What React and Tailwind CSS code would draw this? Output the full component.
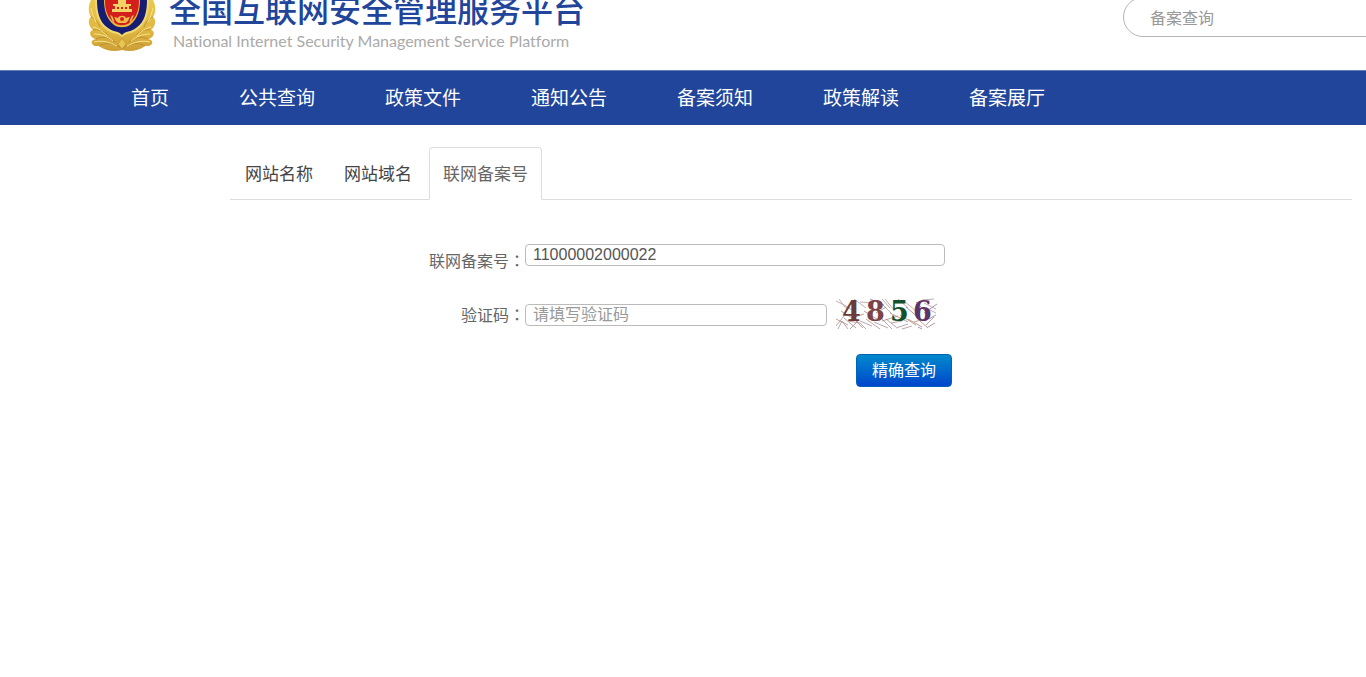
import { useState } from "react";

const menus = ['首页', '公共查询', '政策文件', '通知公告', '备案须知', '政策解读', '备案展厅'];

const tabs = [
    { id: 'name', label: '网站名称' },
    { id: 'domain', label: '网站域名' },
    { id: 'record', label: '联网备案号' },
];

const code = [
    { char: '4', x: 6, color: '#6b3a3a' },
    { char: '8', x: 30, color: '#7a4448' },
    { char: '5', x: 54, color: '#14502c' },
    { char: '6', x: 77, color: '#5c3468' },
];

function Emblem() {
    return (
        <svg className="shrink-0" width="68" height="52" viewBox="0 0 68 52" aria-hidden="true">
            <defs>
                <linearGradient id="gold" x1="0" y1="0" x2="0" y2="1">
                    <stop offset="0" stopColor="#ecc94e" />
                    <stop offset="0.6" stopColor="#e0b640" />
                    <stop offset="1" stopColor="#cc9f36" />
                </linearGradient>
            </defs>
            {/* wreath */}
            <path d="M3 0 C0 6 0 12 3 17 C-1 20 1 27 5 30 C0 31 2 38 8 39 C1 40 3 47 11 46 C17 51 27 52 34 50 C41 52 51 51 57 46 C65 47 67 40 60 39 C66 38 68 31 63 30 C67 27 69 20 65 17 C68 12 68 6 65 0 Z" fill="url(#gold)" />
            <g fill="none" stroke="#b58a30" strokeWidth="0.8">
                <path d="M3 17 C7 18 10 22 12 27 M5 30 C11 29 16 31 20 35 M8 39 C14 36 21 37 27 42 M11 46 C18 42 26 43 33 48" />
                <path d="M65 17 C61 18 58 22 56 27 M63 30 C57 29 52 31 48 35 M60 39 C54 36 47 37 41 42 M57 46 C50 42 42 43 35 48" />
            </g>
            <g fill="none" stroke="#f7e58c" strokeWidth="1">
                <path d="M3 8 C4 13 6 18 8 22 M5 27 C10 28 15 31 19 36 M6 34 C13 34 19 36 25 41 M6 42 C14 40 22 42 29 46" />
                <path d="M65 8 C64 13 62 18 60 22 M63 27 C58 28 53 31 49 36 M62 34 C55 34 49 36 43 41 M62 42 C54 40 46 42 39 46" />
            </g>
            {/* shield */}
            <path d="M7 0 C7 12 9 23 19 30 C24 34 30 33 34 37 C38 33 44 34 49 30 C59 23 61 12 61 0 Z" fill="#f0d872" />
            <path d="M9 0 C9 11 11 22 20 28 C25 32 31 31 34 35 C37 31 43 32 48 28 C57 22 59 11 59 0 Z" fill="#171d72" />
            {/* red disc with the gate and the gear */}
            <path d="M16 0 C16 9 18 19 26 25 C30 28 38 28 42 25 C50 19 52 9 52 0 Z" fill="#e8b63e" />
            <path d="M17 0 C17 9 19 18 27 23 C31 26 37 26 41 23 C49 18 51 9 51 0 Z" fill="#d51f1c" />
            <path d="M24 12 H44 V9 H41 V6 H43 V4 H38 V0 H30 V4 H25 V6 H27 V9 H24 Z" fill="#f3d266" />
            <path d="M29 7 H31 V9 H29 Z M33 7 H35 V9 H33 Z M37 7 H39 V9 H37 Z" fill="#d51f1c" />
            <path d="M22 15 C26 17 28 17 30 18 C31 15 37 15 38 18 C40 17 42 17 46 15 L43 22 C41 21 39 21 38 23 H30 C29 21 27 21 25 22 Z" fill="#efb94a" />
            <path d="M25 16 L28 23 M43 16 L40 23" stroke="#c81a18" strokeWidth="1.4" />
            <circle cx="34" cy="19" r="2" fill="#d51f1c" />
            {/* knot under the shield */}
            <path d="M34 38 L30 44 L34 49 L38 44 Z" fill="#e9c650" stroke="#b58a30" strokeWidth="0.6" />
        </svg>
    )
}

function Captcha() {
    return (
        <svg className="overflow-visible" width="101" height="31" viewBox="0 0 101 31" role="img" aria-label="验证码图片">
            <g fill="none" strokeWidth="0.8">
                <path stroke="#b59a9a" d="M0 2 L14 9 M3 0 L9 8 L20 12 M18 0 L30 9 M24 3 L38 4 M46 0 L54 9 M49 0 L58 11 M44 3 L56 15 M62 0 L72 9 M68 2 L80 12 M86 1 L98 0 M88 4 L100 10 M90 9 L100 14" />
                <path stroke="#a98f96" d="M0 27 L8 17 M2 30 L6 22 L12 30 M8 19 L20 29 M12 22 L24 24 L30 30 M18 20 L27 29 M24 22 L36 27 M30 20 L44 30 M38 23 L52 29 M44 18 L56 30 M50 20 L60 28 M55 24 L66 22 M60 29 L72 25 M66 30 L76 27" />
                <path stroke="#b08a80" d="M0 20 L12 26 M5 12 L16 19 L28 15 M14 30 L22 22 M28 12 L44 22 M40 14 L50 8 M46 22 L62 17 M54 14 L72 23 M64 16 L80 26 M72 20 L86 28 M84 22 L92 29 M90 26 L98 18 M78 23 L88 20" />
                <path stroke="#957ba0" d="M34 0 L48 6 M70 8 L84 20 M80 3 L94 17 M88 14 L101 5 M93 20 L100 16 M92 28 L99 24 M82 28 L86 30" />
            </g>
            {code.map((c) => (
                <text key={c.char} x={c.x} y="22" fill={c.color} fontSize="27" className="font-['DejaVu_Serif',serif] font-bold">{c.char}</text>
            ))}
        </svg>
    )
}

function Label({ htmlFor, children }) {
    return (
        <label htmlFor={htmlFor} className="w-[295px] shrink-0 text-right text-base leading-[22px]">
            {children}<span className="font-['Noto_Sans_CJK_TC',sans-serif]">：</span>
        </label>
    )
}

function App() {
    const [active, setActive] = useState('record');
    const [number, setNumber] = useState('11000002000022');

    return (
        <div className="min-h-screen overflow-x-hidden bg-white text-[#666] font-['Liberation_Sans','Noto_Sans_CJK_SC',sans-serif]">
            <header className="flex h-[70px] items-end justify-between overflow-hidden">
                <a href="#" className="flex shrink-0 items-end gap-[13px] pb-[18px] pl-[88px]">
                    <Emblem />
                    <div>
                        <h1 className="text-[32px] leading-8 font-medium whitespace-nowrap text-[#20459b]">全国互联网安全管理服务平台</h1>
                        <p className="pt-[3px] pl-1 text-base leading-[22px] whitespace-nowrap text-[#aaa] font-['Lato',sans-serif] [font-variant-ligatures:none]">National Internet Security Management Service Platform</p>
                    </div>
                </a>
                <input
                    type="text"
                    aria-label="备案查询"
                    placeholder="备案查询"
                    className="-mr-10 mb-[33px] h-10 w-[283px] shrink-0 rounded-full border border-[#b5b5b5] px-[26px] pt-1 text-base outline-none placeholder:text-[#999]"
                />
            </header>

            <nav className="flex h-[55px] items-center gap-[70px] border-t border-[#5f7bb5] bg-[#20459b] pt-[2px] pl-[131px]">
                {menus.map((m, index) => (
                    <a key={index} href="#" className="text-[19px] whitespace-nowrap text-white">{m}</a>
                ))}
            </nav>

            <main className="mt-[22px] mr-[14px] ml-[230px]">
                <div role="tablist" className="flex gap-[3px] border-b border-[#ddd] pl-px">
                    {tabs.map((t) => (
                        <button
                            key={t.id}
                            type="button"
                            role="tab"
                            aria-selected={active === t.id}
                            onClick={() => setActive(t.id)}
                            className={`-mb-px h-[53px] rounded-t border px-[13px] pt-[2px] text-[17px] ${active === t.id ? 'border-[#ddd] border-b-white bg-white text-[#666]' : 'border-transparent text-[#444]'}`}
                        >
                            {t.label}
                        </button>
                    ))}
                </div>

                <form className="mt-11 w-[722px]" onSubmit={(e) => e.preventDefault()}>
                    <div className="flex items-start">
                        <div className="flex w-[295px] shrink-0 pt-[5px]">
                            <Label htmlFor="number">联网备案号</Label>
                        </div>
                        <input
                            id="number"
                            type="text"
                            value={number}
                            onChange={(e) => setNumber(e.target.value)}
                            className="h-[22px] w-[420px] rounded border border-[#bbb] px-[7px] text-base text-[#555] outline-none"
                        />
                    </div>
                    <div className="mt-[26px] flex items-center">
                        <Label htmlFor="code">验证码</Label>
                        <input
                            id="code"
                            type="text"
                            placeholder="请填写验证码"
                            className="mr-[9px] h-[22px] w-[302px] rounded border border-[#bbb] px-[7px] text-base text-[#555] outline-none placeholder:text-[#999]"
                        />
                        <Captcha />
                    </div>
                    <div className="mt-6 flex justify-end">
                        <button type="submit" className="h-[33px] rounded border border-[#0064b4] bg-linear-to-b from-[#0088cc] to-[#0044cc] px-[15px] text-base text-white">
                            精确查询
                        </button>
                    </div>
                </form>
            </main>
        </div>
    )
}
export default App
